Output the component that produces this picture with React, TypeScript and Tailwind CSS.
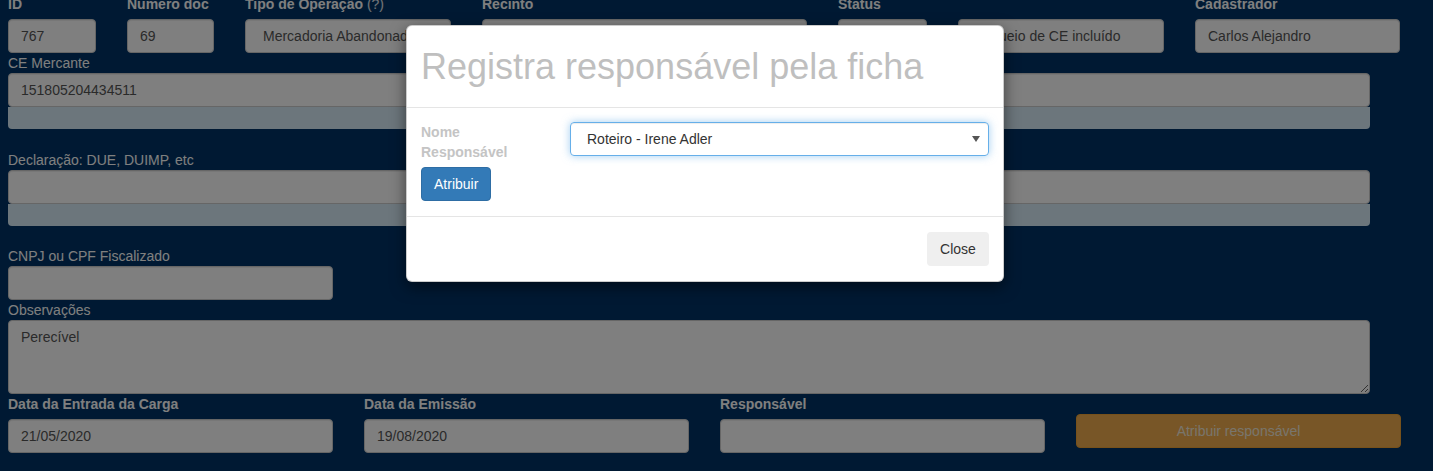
import React from 'react';

const inputBase =
  'h-[34px] rounded-[4px] border border-[#cccccc] bg-white px-3 text-sm leading-[32px] text-[#555555] shadow-[inset_0_1px_1px_rgba(0,0,0,0.075)]';
const inputCls = `${inputBase} w-full`;

const Field: React.FC<{ label: React.ReactNode; value?: string; width: string; textCls?: string }> = ({
  label,
  value,
  width,
  textCls,
}) => (
  <div className={width}>
    <div className="mb-[5px] font-bold leading-5">{label}</div>
    <div className={`${inputCls} ${textCls ?? ''}`}>{value}</div>
  </div>
);

const App: React.FC = () => {
  return (
    <div className="relative h-[471px] overflow-hidden bg-[#003366] font-['Liberation_Sans',Arial,sans-serif] text-sm text-white">
      {/* Form behind the modal */}
      <div className="-mt-[6px] px-2">
        <div className="flex gap-[31px]">
          <Field label="ID" value="767" width="w-[88px]" />
          <Field label="Numero doc" value="69" width="w-[87px]" />
          <Field
            label={
              <>
                Tipo de Operação <span className="font-normal text-white/90">(?)</span>
              </>
            }
            value="Mercadoria Abandonada"
            width="w-[206px]"
            textCls="pl-[17px] text-[#3b5676] overflow-hidden whitespace-nowrap"
          />
          <Field label="Recinto" value="" width="w-[325px]" />
          <Field label="Status" value="" width="w-[89px]" />
          <div className="w-[206px]">
            <div className="mb-[5px] leading-5">&nbsp;</div>
            <div className={`${inputCls} overflow-hidden whitespace-nowrap text-[#31708f]`}>
              Bloqueio de CE incluído
            </div>
          </div>
          <Field label="Cadastrador" value="Carlos Alejandro" width="w-[205px]" />
        </div>

        <div className="w-[1362px]">
          <div className="leading-5">CE Mercante</div>
          <div className={inputCls}>151805204434511</div>
          <div className="h-[22px] rounded-b-[4px] bg-[#d8edf8]" />

          <div className="mt-[21px] leading-5">Declaração: DUE, DUIMP, etc</div>
          <div className={inputCls} />
          <div className="h-[22px] rounded-b-[4px] bg-[#d8edf8]" />
        </div>

        <div className="mt-[20px] leading-5">CNPJ ou CPF Fiscalizado</div>
        <div className={`${inputBase} w-[325px]`} />

        <div className="leading-5">Observações</div>
        <textarea
          readOnly
          defaultValue="Perecível"
          className="block h-[74px] w-[1362px] rounded-[4px] border border-[#cccccc] bg-white px-3 py-[6px] text-sm leading-5 text-[#555555] outline-none"
        />

        <div className="flex gap-[31px]">
          <Field label="Data da Entrada da Carga" value="21/05/2020" width="w-[325px]" />
          <Field label="Data da Emissão" value="19/08/2020" width="w-[325px]" />
          <Field label="Responsável" value="" width="w-[325px]" />
          <div className="w-[325px] pt-[20px]">
            <div className="flex h-[34px] items-center justify-center rounded-[4px] border border-[#eea236] bg-[#f0ad4e] text-sm text-[#f3ead9]">
              Atribuir responsável
            </div>
          </div>
        </div>
      </div>

      {/* Backdrop */}
      <div className="absolute inset-0 bg-black/50" />

      {/* Modal */}
      <div className="absolute left-[406px] top-[25px] w-[598px] rounded-[6px] border border-black/20 bg-white shadow-[0_5px_15px_rgba(0,0,0,0.5)]">
        <div className="flex h-[82px] items-center border-b border-[#e5e5e5] px-[14px]">
          <h4 className="text-[36px] leading-none text-[#bfbfbf]">Registra responsável pela ficha</h4>
        </div>

        <div className="px-[14px] pb-[15px] pt-[14px]">
          <div className="flex">
            <div className="w-[149px] font-bold leading-5 text-[#c4c4c4]">
              Nome
              <br />
              Responsável
            </div>
            <div className="flex h-[34px] flex-1 items-center rounded-[4px] border border-[#66afe9] pl-[16px] pr-[8px] text-[#333333] shadow-[inset_0_1px_1px_rgba(0,0,0,0.075),0_0_8px_rgba(102,175,233,0.6)]">
              <span className="flex-1">Roteiro - Irene Adler</span>
              <svg width="8" height="6" viewBox="0 0 8 6" className="text-[#555555]">
                <path d="M0 0h8L4 6z" fill="currentColor" />
              </svg>
            </div>
          </div>
          <button className="mt-[5px] h-[34px] rounded-[4px] border border-[#2e6da4] bg-[#337ab7] px-3 text-sm text-white">
            Atribuir
          </button>
        </div>

        <div className="flex justify-end border-t border-[#e5e5e5] px-[14px] py-[15px]">
          <button className="h-[34px] w-[62px] rounded-[4px] bg-[#efefef] text-sm text-[#333333]">Close</button>
        </div>
      </div>
    </div>
  );
};

export default App;
